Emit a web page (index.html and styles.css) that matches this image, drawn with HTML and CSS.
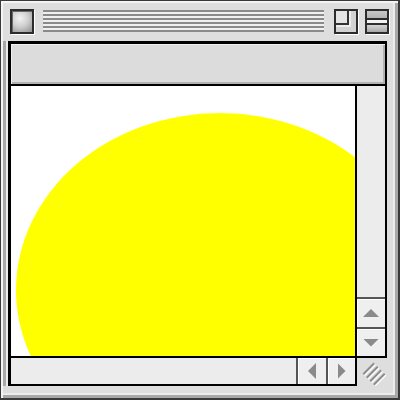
FILE: index.html
```html
<!DOCTYPE html>
<html>
<head>
<meta charset="utf-8">
<link rel="stylesheet" href="styles.css">
</head>
<body>
<div class="window">
  <div class="titlebar">
    <div class="close-box"></div>
    <div class="stripes"></div>
    <div class="zoom-box">
      <svg width="20" height="21" viewBox="0 0 20 21">
        <rect x="0" y="0" width="20" height="21" fill="#d2d2d2"/>
        <rect x="0" y="0" width="12" height="13" fill="#e4e4e4"/>
        <path d="M12 0 V13 H0" fill="none" stroke="#333" stroke-width="2"/>
        <path d="M14 0 V15 H0" fill="none" stroke="#f6f6f6" stroke-width="1.5"/>
      </svg>
    </div>
    <div class="collapse-box">
      <div class="cb-top"></div>
      <div class="cb-line"></div>
      <div class="cb-mid"></div>
      <div class="cb-line"></div>
      <div class="cb-bot"></div>
    </div>
  </div>
  <div class="frame">
    <div class="header"></div>
    <div class="content">
      <svg class="art" width="344" height="270" viewBox="0 0 344 270">
        <ellipse cx="209" cy="204" rx="204" ry="177" fill="#ffff00"/>
      </svg>
    </div>
    <div class="vscroll">
      <div class="track"></div>
      <div class="arrow up"></div>
      <div class="arrow down"></div>
    </div>
    <div class="hscroll">
      <div class="track"></div>
      <div class="arrow left"></div>
      <div class="arrow right"></div>
    </div>
    <div class="grip">
      <svg width="30" height="28" viewBox="0 0 30 28">
        <g stroke="#ffffff" stroke-width="2" stroke-linecap="square">
          <line x1="8" y1="16.5" x2="17.5" y2="7"/>
          <line x1="11.5" y1="20" x2="21" y2="10.5"/>
          <line x1="15" y1="23.5" x2="24.5" y2="14"/>
          <line x1="18.5" y1="27" x2="28" y2="17.5"/>
        </g>
        <g stroke="#8c8c8c" stroke-width="2" stroke-linecap="square">
          <line x1="7" y1="15.5" x2="16.5" y2="6"/>
          <line x1="10.5" y1="19" x2="20" y2="9.5"/>
          <line x1="14" y1="22.5" x2="23.5" y2="13"/>
          <line x1="17.5" y1="26" x2="27" y2="16.5"/>
        </g>
      </svg>
    </div>
  </div>
</div>
</body>
</html>
```

FILE: styles.css
```css
html, body {
  margin: 0;
  padding: 0;
  background: #ffffff;
}

.window {
  width: 400px;
  height: 400px;
  box-sizing: border-box;
  border-top: 1px solid #3a3a3a;
  border-left: 1px solid #3a3a3a;
  border-right: 2px solid #3a3a3a;
  border-bottom: 2px solid #3a3a3a;
  background: #dedede;
  box-shadow: inset 2px 2px 0 #f4f4f4, inset -3px -3px 0 #a8a8a8, inset -5px -5px 0 #ececec;
}

.titlebar {
  height: 40px;
  display: flex;
  align-items: center;
  padding-left: 9px;
}

.close-box {
  width: 24px;
  height: 25px;
  box-sizing: border-box;
  border: 2px solid #2c2c2c;
  background: radial-gradient(circle at 40% 35%, #f2f2f2 0%, #d0d0d0 45%, #8e8e8e 100%);
  box-shadow: 1px 1px 0 #ffffff, inset 1px 1px 0 #6a6a6a;
}

.stripes {
  margin-left: 9px;
  width: 281px;
  height: 22px;
  background: repeating-linear-gradient(to bottom, #8a8a8a 0 2px, #efefef 2px 4px);
}

.zoom-box {
  margin-left: 10px;
  width: 24px;
  height: 25px;
  box-sizing: border-box;
  border: 2px solid #2c2c2c;
  box-shadow: 1px 1px 0 #ffffff;
}

.zoom-box svg {
  display: block;
}

.collapse-box {
  margin-left: 7px;
  width: 24px;
  height: 25px;
  box-sizing: border-box;
  border: 2px solid #2c2c2c;
  box-shadow: 1px 1px 0 #ffffff;
  display: flex;
  flex-direction: column;
}

.cb-top {
  height: 7px;
  background: linear-gradient(#c8c8c8, #b4b4b4);
}

.cb-line {
  height: 2px;
  background: #2c2c2c;
}

.cb-mid {
  height: 3px;
  background: #f2f2f2;
}

.cb-bot {
  flex: 1;
  background: linear-gradient(#d4d4d4, #a8a8a8);
}

.frame {
  margin-left: 7px;
  width: 376px;
  display: grid;
  grid-template-columns: 346px 30px;
  grid-template-rows: 42px 272px 28px;
  border-left: 3px solid #000;
  border-top: 3px solid #000;
  box-shadow: -2px 0 0 #ececec, -5px 0 0 #a9a9a9;
}

.header {
  grid-column: 1 / 3;
  border-right: 2px solid #000;
  border-bottom: 2px solid #000;
  background: #dcdcdc;
  box-shadow: inset 1px 1px 0 #f0f0f0, inset -2px -2px 0 #b2b2b2;
}

.content {
  background: #ffffff;
  border-right: 2px solid #000;
  border-bottom: 2px solid #000;
  overflow: hidden;
}

.art {
  display: block;
}

.vscroll {
  border-right: 2px solid #000;
  border-bottom: 2px solid #000;
  background: #ececec;
  display: flex;
  flex-direction: column;
}

.hscroll {
  border-right: 2px solid #000;
  border-bottom: 2px solid #000;
  background: #ececec;
  display: flex;
}

.track {
  flex: 1;
}

.arrow {
  display: flex;
  align-items: center;
  justify-content: center;
  background: #efefef;
  box-shadow: inset 1px 1px 0 #ffffff;
}

.vscroll .arrow {
  border-top: 2px solid #555;
}

.hscroll .arrow {
  border-left: 2px solid #555;
}

.arrow.up { height: 28px; }
.arrow.down { height: 27px; }
.arrow.left { width: 28px; }
.arrow.right { width: 27px; }

.arrow::before {
  content: "";
  display: block;
  background: #8a8a8a;
}

.arrow.up::before {
  width: 16px;
  height: 8px;
  clip-path: polygon(50% 0, 100% 100%, 0 100%);
}

.arrow.down::before {
  width: 16px;
  height: 8px;
  clip-path: polygon(0 0, 100% 0, 50% 100%);
}

.arrow.left::before {
  width: 8px;
  height: 16px;
  clip-path: polygon(100% 0, 100% 100%, 0 50%);
}

.arrow.right::before {
  width: 8px;
  height: 16px;
  clip-path: polygon(0 0, 100% 50%, 0 100%);
}

.grip svg {
  display: block;
}
```
